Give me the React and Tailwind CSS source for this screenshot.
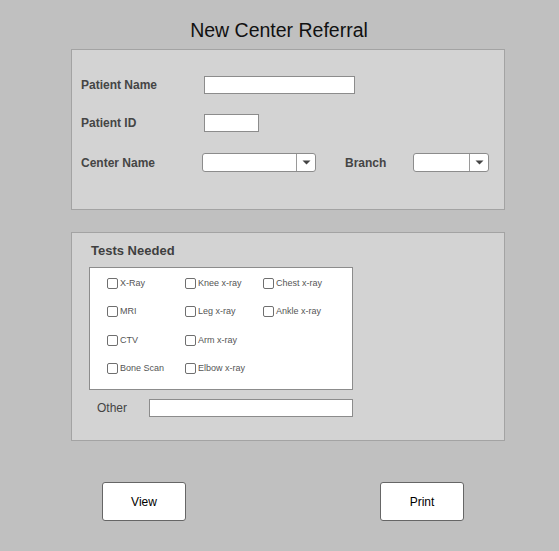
import React from "react";

const TESTS = [
  ["X-Ray", "Knee x-ray", "Chest x-ray"],
  ["MRI", "Leg x-ray", "Ankle x-ray"],
  ["CTV", "Arm x-ray", null],
  ["Bone Scan", "Elbow x-ray", null],
];

function TextBox({ className }) {
  return <div className={`h-[18px] bg-white border border-[#8c8c8c] ${className}`} />;
}

function Select({ className }) {
  return (
    <div className={`h-[19px] flex bg-white border border-[#8c8c8c] rounded-[3px] ${className}`}>
      <div className="flex-1" />
      <div className="w-[19px] border-l border-[#9a9a9a] flex items-center justify-center">
        <svg width="9" height="5" viewBox="0 0 9 5">
          <path d="M0.5 0.5 L8.5 0.5 L4.5 4.5 Z" fill="#444" />
        </svg>
      </div>
    </div>
  );
}

function Check({ label }) {
  return (
    <div className="flex items-center">
      <div className="w-[11px] h-[11px] bg-white border border-[#6f6f6f] rounded-[2px]" />
      <span className="ml-[2px] text-[9px] leading-[11px] text-[#555]">{label}</span>
    </div>
  );
}

export default function App() {
  return (
    <div className="w-[559px] h-[551px] bg-[#c0c0c0] font-['Liberation_Sans',Arial,sans-serif] overflow-hidden">
      <h1 className="pt-[18px] ml-[-1px] text-center text-[19.5px] leading-[24px] text-[#111]">New Center Referral</h1>

      {/* Patient panel */}
      <div className="mt-[7px] ml-[71px] w-[434px] h-[161px] bg-[#d3d3d3] border border-[#a3a3a3] pt-[26px] pl-[9px]">
        <div className="flex items-center">
          <span className="w-[123px] text-[12px] font-bold text-[#454545]">Patient Name</span>
          <TextBox className="w-[151px]" />
        </div>
        <div className="flex items-center mt-[20px]">
          <span className="w-[123px] text-[12px] font-bold text-[#454545]">Patient ID</span>
          <TextBox className="w-[55px]" />
        </div>
        <div className="flex items-center mt-[21px]">
          <span className="w-[121px] text-[12px] font-bold text-[#454545]">Center Name</span>
          <Select className="w-[114px]" />
          <span className="ml-[29px] w-[68px] text-[12px] font-bold text-[#454545]">Branch</span>
          <Select className="w-[76px]" />
        </div>
      </div>

      {/* Tests panel */}
      <div className="mt-[22px] ml-[71px] w-[434px] h-[209px] bg-[#d3d3d3] border border-[#a3a3a3] pt-[10px]">
        <h2 className="ml-[19px] text-[13px] leading-[16px] font-bold text-[#3f3f3f]">Tests Needed</h2>
        <div className="mt-[8px] ml-[17px] w-[264px] h-[123px] bg-white border border-[#8c8c8c] pt-[10px] pl-[17px]">
          {TESTS.map((row, i) => (
            <div key={i} className="grid grid-cols-[78px_78px_78px] items-start h-[28.4px]">
              {row.map((t, j) => (t ? <Check key={j} label={t} /> : <div key={j} />))}
            </div>
          ))}
        </div>
        <div className="flex items-center mt-[9px] ml-[25px]">
          <span className="w-[52px] text-[12px] text-[#444]">Other</span>
          <TextBox className="w-[204px]" />
        </div>
      </div>

      <div className="flex mt-[41px] ml-[102px]">
        <button className="w-[84px] h-[39px] bg-white border border-[#666] rounded-[3px] text-[12px] text-black">View</button>
        <button className="ml-[194px] w-[84px] h-[39px] bg-white border border-[#666] rounded-[3px] text-[12px] text-black">Print</button>
      </div>
    </div>
  );
}
